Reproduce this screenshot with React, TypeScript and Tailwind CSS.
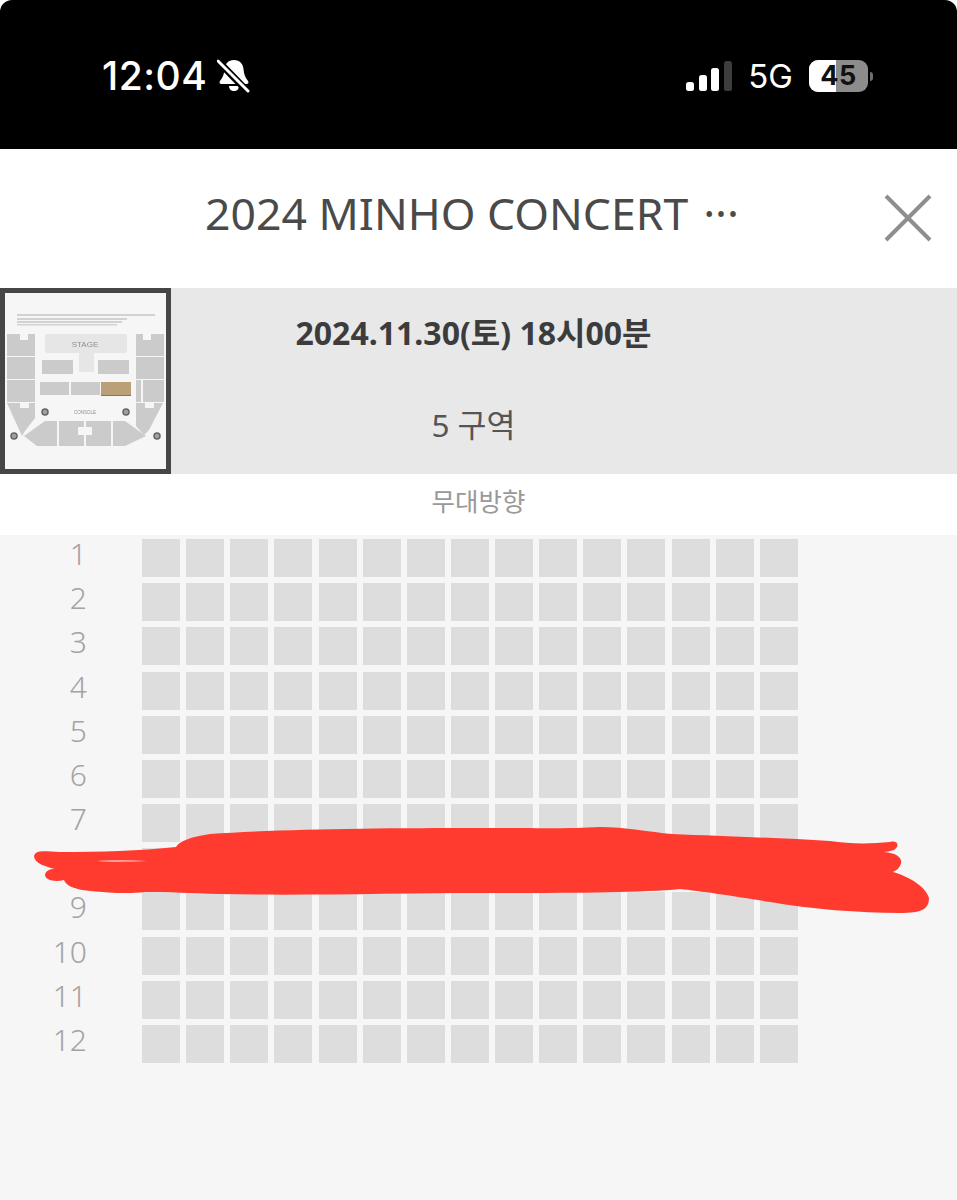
import React from 'react';

const rows = [1, 2, 3, 4, 5, 6, 7, 8, 9, 10, 11, 12];
const cols = Array.from({ length: 15 }, (_, i) => i);
const KR = "font-['Noto_Sans','Noto_Sans_CJK_KR',sans-serif]";

const StatusBar = () => (
  <div className="h-[149px] bg-black rounded-t-[12px] flex items-start justify-between pt-[54px] pl-[102px] pr-[84px] text-white font-['Inter',sans-serif]">
    <div className="flex items-center gap-[10px] h-[44px]">
      <span className="text-[39px] leading-[44px] font-medium tracking-[0.5px]">12:04</span>
      <svg width="34" height="36" viewBox="0 0 34 36">
        <path d="M17 2c-6 0-9 4-9.500 9-.4 5-1.500 8-4.500 12-1 1.500-.5 3 1.500 3h25c2 0 2.500-1.500 1.500-3-3-4-4-7-4.500-12C26 6 23 2 17 2z" fill="#fff" />
        <path d="M12 28h10c0 3-2 5-5 5s-5-2-5-5z" fill="#fff" />
        <path d="M0 2 L32 35" stroke="#000" strokeWidth="7" />
        <path d="M1 3 L31 33" stroke="#fff" strokeWidth="3" strokeLinecap="round" />
      </svg>
    </div>
    <div className="flex items-center h-[44px]">
      <svg width="46" height="30" viewBox="0 0 46 30" className="mr-[16px]">
        <rect x="0" y="21" width="8" height="9" rx="2.500" fill="#fff" />
        <rect x="13" y="14" width="8" height="16" rx="2.500" fill="#fff" />
        <rect x="25" y="7" width="8" height="23" rx="2.500" fill="#fff" />
        <rect x="38" y="0" width="8" height="30" rx="2.500" fill="#3d3d3d" />
      </svg>
      <span className="text-[33px] leading-[44px] mr-[16px]">5G</span>
      <div className="relative w-[59px] h-[32px] rounded-[9px] overflow-hidden bg-[#8c8c8c]">
        <div className="absolute left-0 top-0 bottom-0 w-[27px] bg-white" />
        <span className="absolute inset-0 flex items-center justify-center text-[27px] font-bold text-[#111] tracking-[0.5px]">45</span>
      </div>
      <div className="w-[3px] h-[9px] ml-[2px] rounded-r-full bg-[#6e6e6e]" />
    </div>
  </div>
);

// venue map, blurred a little like the small picture in the app
const Thumb = () => (
  <div className="w-[171px] h-[186px] shrink-0 border-[5px] border-[#464646] bg-[#f6f6f6] overflow-hidden">
    <svg width="161" height="176" viewBox="0 0 161 176" className="blur-[0.4px]">
      <g fill="#d2d2d2">
        <rect x="12" y="21" width="138" height="2" />
        <rect x="12" y="25" width="110" height="2" />
        <rect x="12" y="28" width="105" height="2" />
        <rect x="12" y="31" width="100" height="1.500" />
      </g>
      <g fill="#e6e6e6">
        <rect x="40" y="41" width="82" height="19" rx="2" />
        <rect x="74" y="60" width="15" height="19" />
      </g>
      <text x="80" y="54" textAnchor="middle" fontSize="8" fill="#8f8f8f" fontFamily="Liberation Sans">STAGE</text>
      <g fill="#cbcbcb">
        <path d="M2 41h13v6h8v-6h7v22H2z" />
        <rect x="2" y="64" width="28" height="22" />
        <rect x="2" y="87" width="28" height="22" />
        <path d="M2 117l11 14 4-6 13-15v9l-10 14-2 4z" />
        <path d="M2 110h13v5h9v-5h6v15l-10 13-3 5z" />
        <path d="M131 41h7v6h8v-6h13v22h-28z" />
        <rect x="131" y="64" width="28" height="22" />
        <rect x="131" y="87" width="5" height="22" />
        <rect x="138" y="87" width="21" height="22" />
        <path d="M131 110h9v5h9v-5h9l-14 27-5 5-8-9z" />
        <rect x="37" y="67" width="31" height="14" />
        <rect x="93" y="67" width="31" height="14" />
        <rect x="35" y="89" width="29" height="13" />
        <rect x="66" y="89" width="29" height="13" />
        <path d="M19 143l21-15h12v25H32z" />
        <rect x="54" y="128" width="25" height="25" />
        <rect x="81" y="128" width="25" height="25" />
        <path d="M108 128h12l21 15-21 10h-12z" />
      </g>
      <rect x="96" y="89" width="30" height="13" fill="#b9a077" />
      <rect x="96" y="102" width="30" height="1" fill="#7a68b0" />
      <text x="80" y="121" textAnchor="middle" fontSize="4.500" fill="#8f8f8f" fontFamily="Liberation Sans">CONSOLE</text>
      <rect x="73" y="134" width="14" height="8" fill="#f6f6f6" />
      <g fill="#a0a0a0" stroke="#666666" strokeWidth="1.500">
        <circle cx="40" cy="119" r="3" />
        <circle cx="121" cy="119" r="3" />
        <circle cx="9" cy="143" r="3" />
        <circle cx="152" cy="143" r="3" />
      </g>
    </svg>
  </div>
);

const Scribble = () => (
  <svg width="957" height="100" viewBox="0 0 957 100" className="absolute left-0 top-[825px]">
    <path
      fill="#ff3b30"
      d="M176 22 C180 16 190 12 210 9 C280 4 380 3 480 3 C530 3 570 4 600 2 C625 2 650 7 672 9 C720 11 780 13 830 16 C850 19 870 19 890 17 C898 15 900 21 894 25 C890 26 886 27 884 27 C898 28 904 34 900 41 C898 45 894 46 893 47 C910 52 926 62 929 73 C929 84 922 88 900 88 C860 88 810 84 770 77 C740 72 700 66 680 64 C640 68 560 68 480 68 C400 68 300 71 220 69 C190 68 170 67 145 67 C130 69 110 68 90 66 C72 64 66 60 64 55 C56 57 46 56 45 50 C46 45 50 44 55 44 C46 42 34 38 34 31 C36 25 42 26 60 27 C100 27 140 26 176 22 Z"
    />
    <path fill="#fff" fillOpacity="0.5" d="M97 36 C110 34.500 130 35 147 36 C130 37 110 37.500 97 36 Z" />
  </svg>
);

export default function App() {
  return (
    <div className={`relative w-[957px] h-[1200px] overflow-hidden bg-white flex flex-col ${KR}`}>
      <StatusBar />

      {/* title */}
      <div className="h-[139px] shrink-0 bg-white relative flex items-center justify-center gap-[15px] pr-[13px] pb-[10px] text-[44.500px] leading-none text-[#4a4a4a]">
        <span>2024 MINHO CONCERT</span>
        <span>···</span>
        <svg width="48" height="48" viewBox="0 0 48 48" className="absolute left-[884px] top-[45px]">
          <path d="M2 2 L46 46 M46 2 L2 46" stroke="#8e8e8e" strokeWidth="4" />
        </svg>
      </div>

      {/* selected show */}
      <div className="h-[186px] shrink-0 bg-[#e8e8e8] flex">
        <Thumb />
        <div className="flex-1 flex flex-col items-center pr-[181px]">
          <div className="mt-[25px] text-[32px] leading-[40px] font-bold text-[#3c3c3c] whitespace-nowrap">2024.11.30(토) 18시00분</div>
          <div className="mt-[52px] text-[31.500px] leading-[40px] text-[#555555] whitespace-nowrap">5 구역</div>
        </div>
      </div>

      <div className="h-[61px] shrink-0 bg-white flex items-center justify-center text-[25.500px] text-[#999999] pb-[6px]">무대방향</div>

      {/* seats */}
      <div className="flex-1 bg-[#f6f6f6] flex pt-[4px]">
        <div className="w-[142px] shrink-0 flex flex-col gap-[6.180px]">
          {rows.map(r => (
            <div key={r} className="h-[38px] pr-[55px] pb-[8px] flex items-center justify-end text-[30px] leading-none text-[#a3a3a3] font-light">
              {r}
            </div>
          ))}
        </div>
        <div className="grid grid-cols-[repeat(15,38px)] auto-rows-[38px] gap-x-[6.140px] gap-y-[6.180px]">
          {rows.map(r => cols.map(c => <div key={`${r}-${c}`} className="bg-[#dddddd]" />))}
        </div>
      </div>

      <Scribble />
    </div>
  );
}
